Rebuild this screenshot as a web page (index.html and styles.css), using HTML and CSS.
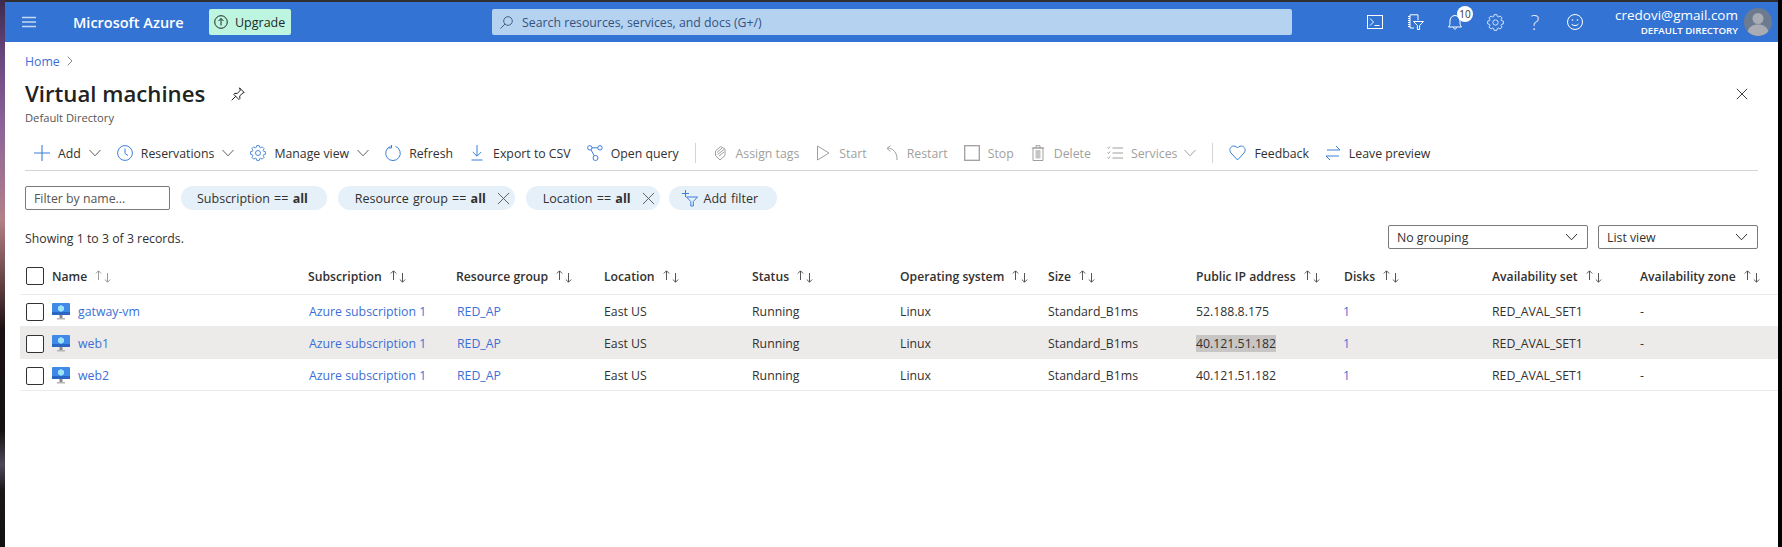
FILE: index.html
```html
<!DOCTYPE html>
<html>
<head>
    <title>Virtual machines - Microsoft Azure</title>
    <link rel="stylesheet" href="styles.css">
</head>
<body>
    <svg class="sprite">
        <symbol id="chev" viewBox="0 0 12 8"><path d="M.5 1 6 6.800 11.500 1" fill="none" stroke="currentColor"/></symbol>
        <symbol id="cross" viewBox="0 0 14 14"><path d="M1 1l12 12M13 1 1 13" fill="none" stroke="currentColor"/></symbol>
        <symbol id="sort" viewBox="0 0 17 13"><path d="M3.500 10V1M.8 3.500 3.500.8l2.700 2.700" fill="none" stroke="currentColor"/><path d="M12.500 3v9M9.800 9.500l2.700 2.700 2.700-2.700" fill="none" stroke="currentColor"/></symbol>
        <symbol id="gear" viewBox="-8 -8 16 16"><polygon points="-1.79,-5.52 -1.3,-7.39 1.3,-7.39 1.79,-5.52 2.64,-5.17 4.31,-6.14 6.14,-4.31 5.17,-2.64 5.52,-1.79 7.39,-1.3 7.39,1.3 5.52,1.79 5.17,2.64 6.14,4.31 4.31,6.14 2.64,5.17 1.79,5.52 1.3,7.39 -1.3,7.39 -1.79,5.52 -2.64,5.17 -4.31,6.14 -6.14,4.31 -5.17,2.64 -5.52,1.79 -7.39,1.3 -7.39,-1.3 -5.52,-1.79 -5.17,-2.64 -6.14,-4.31 -4.31,-6.14 -2.64,-5.17" fill="none" stroke="currentColor" stroke-width=".9" stroke-linejoin="round"/><circle r="2.500" fill="none" stroke="currentColor" stroke-width=".9"/></symbol>
        <symbol id="vm" viewBox="0 0 18 17">
            <rect y="0" width="18" height="12" rx="1" fill="#3f8ae6"/>
            <rect y="9" width="18" height="3" fill="#2b66c4"/>
            <path d="M9 2l3 1.700v3.400L9 9 6 7.100V3.700z" fill="#9fe3f7"/>
            <rect x="7.500" y="12" width="3" height="3" fill="#8a8a8a"/>
            <rect x="5" y="15" width="8" height="1.500" fill="#b5b5b5"/>
        </symbol>
    </svg>

    <div class="desktop">
        <div class="wallpaper"></div>
        <div class="portal">
            <header class="topbar">
                <div class="menu">
                    <svg width="14" height="12" viewBox="0 0 14 12"><path d="M0 1.500h14M0 6h14M0 10.500h14" stroke="#c5d9f3" stroke-width="1.300"/></svg>
                </div>
                <div class="brand">Microsoft Azure</div>
                <div class="upgrade">
                    <svg width="14" height="14" viewBox="0 0 14 14"><circle cx="7" cy="7" r="6.300" fill="none" stroke="#1c2b25"/><path d="M7 10.500v-7M4.500 6 7 3.500 9.500 6" fill="none" stroke="#1c2b25"/></svg>
                    Upgrade
                </div>
                <div class="search">
                    <svg width="13" height="13" viewBox="0 0 13 13"><circle cx="8" cy="5" r="4.300" fill="none" stroke="#44628a"/><path d="M5 8 .5 12.500" stroke="#44628a"/></svg>
                    Search resources, services, and docs (G+/)
                </div>
                <div class="top-icons">
                    <div class="top-icon"><svg width="16" height="14" viewBox="0 0 16 14"><rect x=".5" y=".5" width="15" height="13" fill="none" stroke="#fff"/><path d="M3 3.500 6.500 7 3 10.500M7.500 10.500h5" fill="none" stroke="#fff"/></svg></div>
                    <div class="top-icon"><svg width="17" height="16" viewBox="0 0 17 16"><path d="M3 .8h8v5.500M7 14H3V.8M1 2.500h2M1 4.500h2M1 6.500h2M1 8.500h2M1 10.500h2M1 12.500h2" fill="none" stroke="#fff"/><path d="M6.500 7.500h10l-3.900 4V15.500h-2.200v-4z" fill="none" stroke="#fff"/></svg></div>
                    <div class="top-icon bell">
                        <svg width="14" height="16" viewBox="0 0 14 16"><path d="M.5 13c1.500-1.500 1.500-3 1.500-6 0-3 2-5.500 5-5.500s5 2.500 5 5.500c0 3 0 4.500 1.500 6zM5.500 13.500c0 2 3 2 3 0" fill="none" stroke="#fff"/></svg>
                        <span class="badge">10</span>
                    </div>
                    <div class="top-icon gear"><svg width="17" height="17"><use href="#gear"/></svg></div>
                    <div class="top-icon help">?</div>
                    <div class="top-icon"><svg width="16" height="16" viewBox="0 0 16 16"><circle cx="8" cy="8" r="7.500" fill="none" stroke="#fff"/><circle cx="5.500" cy="6" r=".8" fill="#fff"/><circle cx="10.500" cy="6" r=".8" fill="#fff"/><path d="M4.500 10c1.500 2 5.500 2 7 0" fill="none" stroke="#fff"/></svg></div>
                </div>
                <div class="user">
                    <div class="user-mail">credovi@gmail.com</div>
                    <div class="user-dir">DEFAULT DIRECTORY</div>
                </div>
                <div class="avatar">
                    <svg width="28" height="28" viewBox="0 0 28 28"><circle cx="14" cy="10.500" r="5.500" fill="#a9adb3"/><path d="M3.500 24c1-5 5-7.500 10.500-7.500S23.500 19 24.500 24c-3 2.700-6.500 4-10.500 4S6.500 26.700 3.500 24z" fill="#a9adb3"/></svg>
                </div>
            </header>

            <div class="blade">
                <div class="breadcrumb">
                    <a>Home</a>
                    <svg width="6" height="10" viewBox="0 0 6 10"><path d="M.7.7 5 5 .7 9.300" fill="none" stroke="#8a8886"/></svg>
                </div>
                <div class="title-row">
                    <h1>Virtual machines</h1>
                    <svg class="pin" width="14" height="14" viewBox="0 0 14 14"><path d="M8.500.8l4.700 4.700-1.200.4-3.300 3 .2 2.600-1 1L2.700 7.300l1-1 2.600.2 3-3.300zM5 9 .7 13.300" fill="none" stroke="#222"/></svg>
                    <svg class="close" width="12" height="12"><use href="#cross"/></svg>
                </div>
                <div class="subtitle">Default Directory</div>

                <div class="toolbar">
                    <div class="cmd"><svg class="ico" width="16" height="16" viewBox="0 0 16 16"><path d="M8 0v16M0 8h16" stroke="currentColor" stroke-width="1.100"/></svg><span>Add</span><svg class="chev" width="12" height="8"><use href="#chev"/></svg></div>
                    <div class="cmd"><svg class="ico" width="16" height="16" viewBox="0 0 16 16"><circle cx="8" cy="8" r="7.400" fill="none" stroke="currentColor"/><path d="M8 3.500V8.500l3 2" fill="none" stroke="currentColor"/></svg><span>Reservations</span><svg class="chev" width="12" height="8"><use href="#chev"/></svg></div>
                    <div class="cmd"><svg class="ico" width="16" height="16"><use href="#gear"/></svg><span>Manage view</span><svg class="chev" width="12" height="8"><use href="#chev"/></svg></div>
                    <div class="cmd"><svg class="ico" width="16" height="16" viewBox="0 0 16 16"><path d="M10.500 1.400a7.300 7.300 0 1 1-5 0M6.500 0v3H3.500" fill="none" stroke="currentColor"/></svg><span>Refresh</span></div>
                    <div class="cmd"><svg class="ico" width="16" height="16" viewBox="0 0 16 16"><path d="M8 0v11M3.800 7 8 11.200 12.200 7M2.500 15h11" fill="none" stroke="currentColor"/></svg><span>Export to CSV</span></div>
                    <div class="cmd"><svg class="ico" width="16" height="16" viewBox="0 0 16 16"><circle cx="2.800" cy="2.800" r="2.200" fill="none" stroke="currentColor"/><circle cx="13" cy="2.800" r="2.200" fill="none" stroke="currentColor"/><circle cx="8.500" cy="13" r="2.500" fill="none" stroke="currentColor"/><path d="M5 2.800h5.800M4 4.800l3.300 6" fill="none" stroke="currentColor"/></svg><span>Open query</span></div>
                    <div class="divider"></div>
                    <div class="cmd off"><svg class="ico" width="16" height="16" viewBox="0 0 16 16"><path d="M8.500 1.500 13 4v6.500L8 15l-4.500-4.500V6zM5 7.500 10 3M5.500 9.500 12 4.500M7 11l5-4" fill="none" stroke="currentColor"/></svg><span>Assign tags</span></div>
                    <div class="cmd off"><svg class="ico" width="16" height="16" viewBox="0 0 16 16"><path d="M2.500 1v14L14 8z" fill="none" stroke="currentColor"/></svg><span>Start</span></div>
                    <div class="cmd off"><svg class="ico" width="16" height="16" viewBox="0 0 16 16"><path d="M14 15C14.500 8 10 3 4.500 3M7.500 .5 4 3.500 7.500 6.500" fill="none" stroke="currentColor"/></svg><span>Restart</span></div>
                    <div class="cmd off"><svg class="ico" width="16" height="16" viewBox="0 0 16 16"><rect x=".7" y=".7" width="14.600" height="14.600" fill="none" stroke="currentColor" stroke-width="1.300"/></svg><span>Stop</span></div>
                    <div class="cmd off"><svg class="ico" width="16" height="16" viewBox="0 0 16 16"><path d="M3 3h10v12.500H3zM1.800 3h12.400M6 3V.7h4V3" fill="none" stroke="currentColor"/><rect x="5.500" y="5" width="5" height="8.500" fill="currentColor" opacity=".6"/></svg><span>Delete</span></div>
                    <div class="cmd off"><svg class="ico" width="16" height="16" viewBox="0 0 16 16"><path d="M5.500 3H16M5.500 8H16M5.500 13H16M.5 2.500l1 1 1.500-2M.5 7.500l1 1 1.500-2M.5 12.500l1 1 1.500-2" fill="none" stroke="currentColor"/></svg><span>Services</span><svg class="chev services-chev" width="12" height="8"><use href="#chev"/></svg></div>
                    <div class="divider"></div>
                    <div class="cmd"><svg class="ico" width="17" height="16" viewBox="0 0 17 16"><path d="M8.500 15 2 8C-.5 5 1.500 1 4.800 1 6.500 1 7.700 2 8.500 3c.8-1 2-2 3.700-2C15.500 1 17.500 5 15 8z" fill="none" stroke="currentColor"/></svg><span>Feedback</span></div>
                    <div class="cmd"><svg class="ico" width="16" height="16" viewBox="0 0 16 16"><path d="M2 5h13M11 1l4 4M14 11H1M5 15l-4-4" fill="none" stroke="currentColor"/></svg><span>Leave preview</span></div>
                </div>

                <div class="filters">
                    <div class="filter-input">Filter by name...</div>
                    <div class="pill"><span>Subscription == <b>all</b></span></div>
                    <div class="pill wide"><span>Resource group == <b>all</b></span><svg width="13" height="13"><use href="#cross"/></svg></div>
                    <div class="pill wide"><span>Location == <b>all</b></span><svg width="13" height="13"><use href="#cross"/></svg></div>
                    <div class="pill add">
                        <svg width="17" height="17" viewBox="0 0 17 17"><path d="M4.500 0v7M1 3.500h7" stroke="#3b7fd9"/><path d="M5.500 7h11l-4.200 4.500V16h-2.500v-4.500z" fill="none" stroke="#3b7fd9"/></svg>
                        <span>Add filter</span>
                    </div>
                </div>

                <div class="records">
                    <span class="records-text">Showing 1 to 3 of 3 records.</span>
                    <div class="selects">
                        <div class="select">No grouping<svg width="13" height="8"><use href="#chev"/></svg></div>
                        <div class="select small">List view<svg width="13" height="8"><use href="#chev"/></svg></div>
                    </div>
                </div>
            </div>

            <table class="grid">
                <colgroup>
                    <col class="col-name"><col span="9" class="col"><col class="col-last">
                </colgroup>
                <thead>
                    <tr>
                        <th><div class="name-cell"><span class="check"></span>Name<svg class="sort name-sort" width="17" height="13"><use href="#sort"/></svg></div></th>
                        <th>Subscription<svg class="sort" width="17" height="13"><use href="#sort"/></svg></th>
                        <th>Resource group<svg class="sort" width="17" height="13"><use href="#sort"/></svg></th>
                        <th>Location<svg class="sort" width="17" height="13"><use href="#sort"/></svg></th>
                        <th>Status<svg class="sort" width="17" height="13"><use href="#sort"/></svg></th>
                        <th>Operating system<svg class="sort" width="17" height="13"><use href="#sort"/></svg></th>
                        <th>Size<svg class="sort" width="17" height="13"><use href="#sort"/></svg></th>
                        <th>Public IP address<svg class="sort" width="17" height="13"><use href="#sort"/></svg></th>
                        <th>Disks<svg class="sort" width="17" height="13"><use href="#sort"/></svg></th>
                        <th>Availability set<svg class="sort" width="17" height="13"><use href="#sort"/></svg></th>
                        <th>Availability zone<svg class="sort" width="17" height="13"><use href="#sort"/></svg></th>
                    </tr>
                </thead>
                <tbody>
                    <tr>
                        <td><div class="name-cell"><span class="check"></span><svg width="18" height="17"><use href="#vm"/></svg><a>gatway-vm</a></div></td>
                        <td><a>Azure subscription 1</a></td><td><a>RED_AP</a></td><td>East US</td><td>Running</td><td>Linux</td><td>Standard_B1ms</td><td>52.188.8.175</td><td><a class="disks">1</a></td><td>RED_AVAL_SET1</td><td>-</td>
                    </tr>
                    <tr class="hover">
                        <td><div class="name-cell"><span class="check"></span><svg width="18" height="17"><use href="#vm"/></svg><a>web1</a></div></td>
                        <td><a>Azure subscription 1</a></td><td><a>RED_AP</a></td><td>East US</td><td>Running</td><td>Linux</td><td>Standard_B1ms</td><td><span class="picked">40.121.51.182</span></td><td><a class="disks">1</a></td><td>RED_AVAL_SET1</td><td>-</td>
                    </tr>
                    <tr>
                        <td><div class="name-cell"><span class="check"></span><svg width="18" height="17"><use href="#vm"/></svg><a>web2</a></div></td>
                        <td><a>Azure subscription 1</a></td><td><a>RED_AP</a></td><td>East US</td><td>Running</td><td>Linux</td><td>Standard_B1ms</td><td>40.121.51.182</td><td><a class="disks">1</a></td><td>RED_AVAL_SET1</td><td>-</td>
                    </tr>
                </tbody>
            </table>
        </div>
        <div class="edge"></div>
    </div>
</body>
</html>
```

FILE: styles.css
```css
html, body { margin: 0; height: 547px; overflow: hidden; background: #000; }
body { font-family: "Open Sans", "Noto Sans", sans-serif; font-size: 12.3px; color: #323130; }
a { color: #3b6fd6; }
svg { flex: none; }
.sprite { display: none; }

.desktop { display: flex; height: 547px; }
.wallpaper { width: 5px; background: linear-gradient(#3d2a4e 0, #6b4a80 60px, #8d6499 130px, #b48088 220px, #5a3a3c 290px, #1b1012 330px, #14100f 430px, #50465a 465px, #1c1618 490px, #111 547px); }
.portal { flex: 1; min-width: 0; background: #fff; border-top: 2px solid #2e2e30; }
.edge { width: 4px; background: #000; }

/* top bar */
.topbar { display: flex; align-items: center; height: 40px; background: #3373d3; color: #fff; }
.menu { display: flex; justify-content: center; width: 48px; }
.brand { margin-left: 20px; width: 109px; font-size: 14.5px; font-weight: 600; white-space: nowrap; }
.upgrade { display: flex; align-items: center; gap: 7px; margin-left: 27px; width: 82px; height: 26px; padding-left: 5px; box-sizing: border-box; background: #bdf5e0; border-radius: 2px; color: #1c2b25; font-size: 12.5px; }
.search { display: flex; align-items: center; gap: 9px; margin-left: 201px; width: 800px; height: 26px; padding-left: 8px; box-sizing: border-box; background: #b6d2f1; border-radius: 2px; color: #33527e; font-size: 12.3px; white-space: nowrap; }
.top-icons { display: flex; margin-left: 63px; }
.top-icon { position: relative; display: flex; align-items: center; justify-content: center; width: 40px; height: 40px; }
.gear { color: #dce8f8; }
.help { font-size: 21px; font-weight: 300; color: #dce8f8; }
.badge { position: absolute; top: 4px; left: 22px; width: 16px; height: 16px; border-radius: 50%; background: #fff; color: #333; font-size: 10px; line-height: 16px; text-align: center; }
.user { margin-left: auto; text-align: right; white-space: nowrap; }
.user-mail { font-size: 13.5px; line-height: 17px; }
.user-dir { font-size: 9.7px; font-weight: 600; line-height: 13px; }
.avatar { margin: 0 6px; width: 28px; height: 28px; border-radius: 50%; background: #6d7b90; overflow: hidden; }

/* blade header */
.blade { padding: 0 20px; }
.breadcrumb { display: flex; align-items: center; gap: 7px; margin-top: 10px; height: 18px; }
.title-row { display: flex; align-items: center; margin-top: 8px; height: 32px; }
h1 { margin: -2px 0 0; font-size: 22.2px; font-weight: 600; color: #222; }
.pin { margin-left: 26px; margin-top: -1px; }
.close { margin-left: auto; margin-right: 10px; color: #222; }
.subtitle { height: 16px; font-size: 11.2px; line-height: 16px; color: #555; }

.toolbar { display: flex; align-items: center; gap: 16px; margin-top: 9px; height: 36px; padding-left: 9px; box-sizing: border-box; border-bottom: 1px solid #d4d4d4; white-space: nowrap; }
.cmd { display: flex; align-items: center; }
.cmd span { padding-top: 2px; }
.ico { margin-right: 8px; color: #3b7fd9; }
.chev { margin-left: 8px; color: #605e5c; }
.services-chev { margin-left: 7px; }
.off, .off .ico, .off .chev { color: #a19f9d; }
.divider { width: 1px; height: 20px; background: #d4d4d4; }

.filters { display: flex; gap: 11px; margin-top: 15px; height: 24px; }
.filter-input { display: flex; align-items: center; width: 145px; padding-left: 8px; box-sizing: border-box; border: 1px solid #7a7a7a; border-radius: 2px; color: #555; }
.pill { display: flex; align-items: center; padding: 0 19px 0 16px; background: #e6f0f9; border-radius: 12px; font-size: 12.5px; word-spacing: 1px; white-space: nowrap; }
.pill svg { margin-left: 11px; margin-right: -13px; color: #555; }
.pill.wide { padding: 0 18px 0 17px; }
.pill.add { gap: 6px; padding-left: 12px; margin-left: -2px; }
.pill.add svg { margin: 0; }

.records { display: flex; align-items: center; justify-content: space-between; margin-top: 15px; height: 24px; }
.records-text { padding-top: 2px; }
.selects { display: flex; gap: 10px; }
.select { display: flex; align-items: center; justify-content: space-between; width: 200px; height: 24px; padding: 0 9px 0 8px; box-sizing: border-box; border: 1px solid #7a7a7a; border-radius: 2px; }
.select.small { width: 160px; }

/* machine list */
.grid { margin: 9px 0 0 15px; width: 1758px; table-layout: fixed; border-collapse: collapse; white-space: nowrap; }
.col-name { width: 288px; }
.col { width: 148px; }
.col-last { width: 138px; }
th { height: 36px; padding: 0; text-align: left; font-size: 12.2px; font-weight: 600; border-bottom: 1px solid #edebe9; color: #323130; }
td { height: 32px; padding: 2px 0 0; box-sizing: border-box; border-bottom: 1px solid #edebe9; }
td a { margin-left: 1px; }
.name-cell a { margin-left: 0; }
td a.disks { margin-left: -1px; }
.hover td { background: #edebe9; }
.name-cell { display: flex; align-items: center; gap: 8px; padding-left: 6px; }
.check { width: 18px; height: 18px; box-sizing: border-box; border: 1px solid #333; border-radius: 2px; background: #fff; }
.sort { margin-left: 8px; vertical-align: -2px; color: #555; }
.name-sort { margin-left: 0; color: #999; }
.picked { background: #c8c6c4; }
```
